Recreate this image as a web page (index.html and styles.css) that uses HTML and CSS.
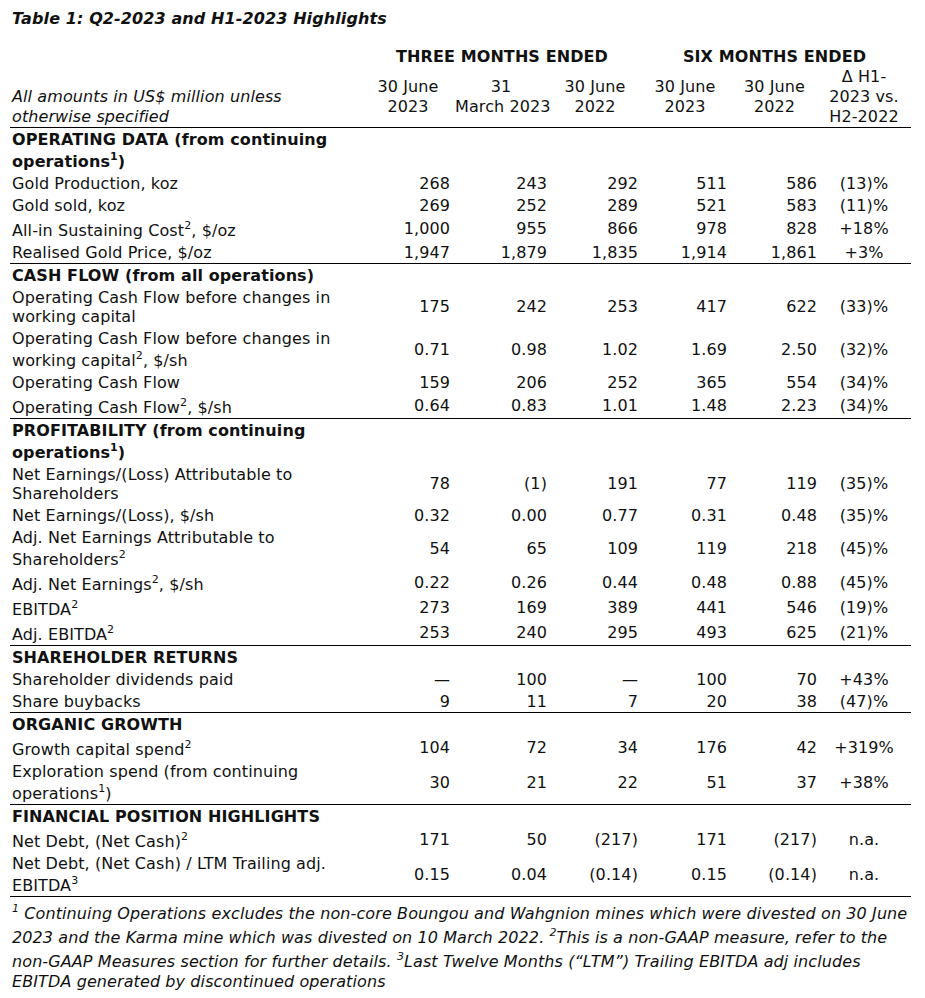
FILE: index.html
```html
<!DOCTYPE html>
<html lang="en">
<head>
<meta charset="utf-8">
<title>Table 1: Q2-2023 and H1-2023 Highlights</title>
<link rel="stylesheet" href="styles.css">
</head>
<body>
<h1 class="title">Table 1: Q2-2023 and H1-2023 Highlights</h1>
<table class="hl">
  <colgroup>
    <col class="c-label"><col class="c-q1"><col class="c-q2"><col class="c-q3"><col class="c-h1"><col class="c-h2"><col class="c-d">
  </colgroup>
  <thead>
    <tr class="group"><th></th><th colspan="3">THREE MONTHS ENDED</th><th colspan="3">SIX MONTHS ENDED</th></tr>
    <tr class="dates">
      <th class="unit">All amounts in US$ million unless<br>otherwise specified</th>
      <th>30 June<br>2023</th><th>31<br>March 2023</th><th>30 June<br>2022</th>
      <th>30 June<br>2023</th><th>30 June<br>2022</th><th>Δ H1-<br>2023 vs.<br>H2-2022</th>
    </tr>
  </thead>
  <tbody>
    <tr class="sec"><td>OPERATING DATA (from continuing operations<sup>1</sup>)</td><td colspan="6"></td></tr>
    <tr><td>Gold Production, koz</td><td>268</td><td>243</td><td>292</td><td>511</td><td>586</td><td>(13)%</td></tr>
    <tr><td>Gold sold, koz</td><td>269</td><td>252</td><td>289</td><td>521</td><td>583</td><td>(11)%</td></tr>
    <tr><td>All-in Sustaining Cost<sup>2</sup>, $/oz</td><td>1,000</td><td>955</td><td>866</td><td>978</td><td>828</td><td>+18%</td></tr>
    <tr><td>Realised Gold Price, $/oz</td><td>1,947</td><td>1,879</td><td>1,835</td><td>1,914</td><td>1,861</td><td>+3%</td></tr>

    <tr class="sec"><td>CASH FLOW (from all operations)</td><td colspan="6"></td></tr>
    <tr><td>Operating Cash Flow before changes in working capital</td><td>175</td><td>242</td><td>253</td><td>417</td><td>622</td><td>(33)%</td></tr>
    <tr><td>Operating Cash Flow before changes in working capital<sup>2</sup>, $/sh</td><td>0.71</td><td>0.98</td><td>1.02</td><td>1.69</td><td>2.50</td><td>(32)%</td></tr>
    <tr><td>Operating Cash Flow</td><td>159</td><td>206</td><td>252</td><td>365</td><td>554</td><td>(34)%</td></tr>
    <tr><td>Operating Cash Flow<sup>2</sup>, $/sh</td><td>0.64</td><td>0.83</td><td>1.01</td><td>1.48</td><td>2.23</td><td>(34)%</td></tr>

    <tr class="sec"><td>PROFITABILITY (from continuing operations<sup>1</sup>)</td><td colspan="6"></td></tr>
    <tr><td>Net Earnings/(Loss) Attributable to Shareholders</td><td>78</td><td>(1)</td><td>191</td><td>77</td><td>119</td><td>(35)%</td></tr>
    <tr><td>Net Earnings/(Loss), $/sh</td><td>0.32</td><td>0.00</td><td>0.77</td><td>0.31</td><td>0.48</td><td>(35)%</td></tr>
    <tr><td>Adj. Net Earnings Attributable to Shareholders<sup>2</sup></td><td>54</td><td>65</td><td>109</td><td>119</td><td>218</td><td>(45)%</td></tr>
    <tr><td>Adj. Net Earnings<sup>2</sup>, $/sh</td><td>0.22</td><td>0.26</td><td>0.44</td><td>0.48</td><td>0.88</td><td>(45)%</td></tr>
    <tr><td>EBITDA<sup>2</sup></td><td>273</td><td>169</td><td>389</td><td>441</td><td>546</td><td>(19)%</td></tr>
    <tr><td>Adj. EBITDA<sup>2</sup></td><td>253</td><td>240</td><td>295</td><td>493</td><td>625</td><td>(21)%</td></tr>

    <tr class="sec"><td>SHAREHOLDER RETURNS</td><td colspan="6"></td></tr>
    <tr><td>Shareholder dividends paid</td><td>—</td><td>100</td><td>—</td><td>100</td><td>70</td><td>+43%</td></tr>
    <tr><td>Share buybacks</td><td>9</td><td>11</td><td>7</td><td>20</td><td>38</td><td>(47)%</td></tr>

    <tr class="sec"><td>ORGANIC GROWTH</td><td colspan="6"></td></tr>
    <tr><td>Growth capital spend<sup>2</sup></td><td>104</td><td>72</td><td>34</td><td>176</td><td>42</td><td>+319%</td></tr>
    <tr><td>Exploration spend (from continuing operations<sup>1</sup>)</td><td>30</td><td>21</td><td>22</td><td>51</td><td>37</td><td>+38%</td></tr>

    <tr class="sec"><td>FINANCIAL POSITION HIGHLIGHTS</td><td colspan="6"></td></tr>
    <tr><td>Net Debt, (Net Cash)<sup>2</sup></td><td>171</td><td>50</td><td>(217)</td><td>171</td><td>(217)</td><td>n.a.</td></tr>
    <tr><td>Net Debt, (Net Cash) / LTM Trailing adj. EBITDA<sup>3</sup></td><td>0.15</td><td>0.04</td><td>(0.14)</td><td>0.15</td><td>(0.14)</td><td>n.a.</td></tr>
  </tbody>
</table>
<p class="notes"><sup>1</sup> Continuing Operations excludes the non-core Boungou and Wahgnion mines which were divested on 30 June<br>2023 and the Karma mine which was divested on 10 March 2022. <sup>2</sup>This is a non-GAAP measure, refer to the<br>non-GAAP Measures section for further details. <sup>3</sup>Last Twelve Months (“LTM”) Trailing EBITDA adj includes<br>EBITDA generated by discontinued operations</p>
</body>
</html>
```

FILE: styles.css
```css
html, body {
  margin: 0;
  padding: 0;
  background: #ffffff;
}

body {
  color: #111111;
  font-family: "DejaVu Sans", Verdana, sans-serif;
  font-size: 16px;
  letter-spacing: 0.1px;
}

.title {
  margin: 0 0 18px 12px;
  padding-top: 9px;
  font-size: 16px;
  line-height: 20px;
  font-style: italic;
  font-weight: bold;
}

.hl {
  margin-left: 10px;
  width: 901px;
  border-collapse: collapse;
  table-layout: fixed;
}

.c-label { width: 356px; }
.c-q1 { width: 89px; }
.c-q2 { width: 97px; }
.c-q3 { width: 91px; }
.c-h1 { width: 89px; }
.c-h2 { width: 90px; }
.c-d { width: 89px; }

.hl th,
.hl td {
  padding: 1.5px 5px 1.5px 0;
  line-height: 19px;
  text-align: right;
  font-weight: normal;
  vertical-align: middle;
}

.hl td:first-child,
.hl th:first-child {
  text-align: left;
  padding-left: 2px;
  padding-right: 0;
}

.hl td:last-child {
  text-align: center;
}

.group th {
  font-weight: bold;
  text-align: center;
  line-height: 20px;
  padding: 0 5px 0 0;
}

.dates {
  border-bottom: 1px solid #000;
}

.dates th {
  text-align: center;
  vertical-align: middle;
  white-space: nowrap;
  line-height: 20px;
  padding: 0 5px 0 0;
}

.dates th.unit {
  text-align: left;
  vertical-align: bottom;
  font-style: italic;
}

.sec {
  border-top: 1px solid #000;
}

.sec td:first-child {
  font-weight: bold;
}

.hl tbody tr:last-child {
  border-bottom: 1px solid #000;
}

sup {
  font-size: 11px;
  line-height: 16.5px;
  vertical-align: 7px;
}

.notes {
  margin: 3px 0 0 12px;
  font-style: italic;
  line-height: 20px;
  white-space: nowrap;
}

.notes sup {
  line-height: 18px;
}
```
